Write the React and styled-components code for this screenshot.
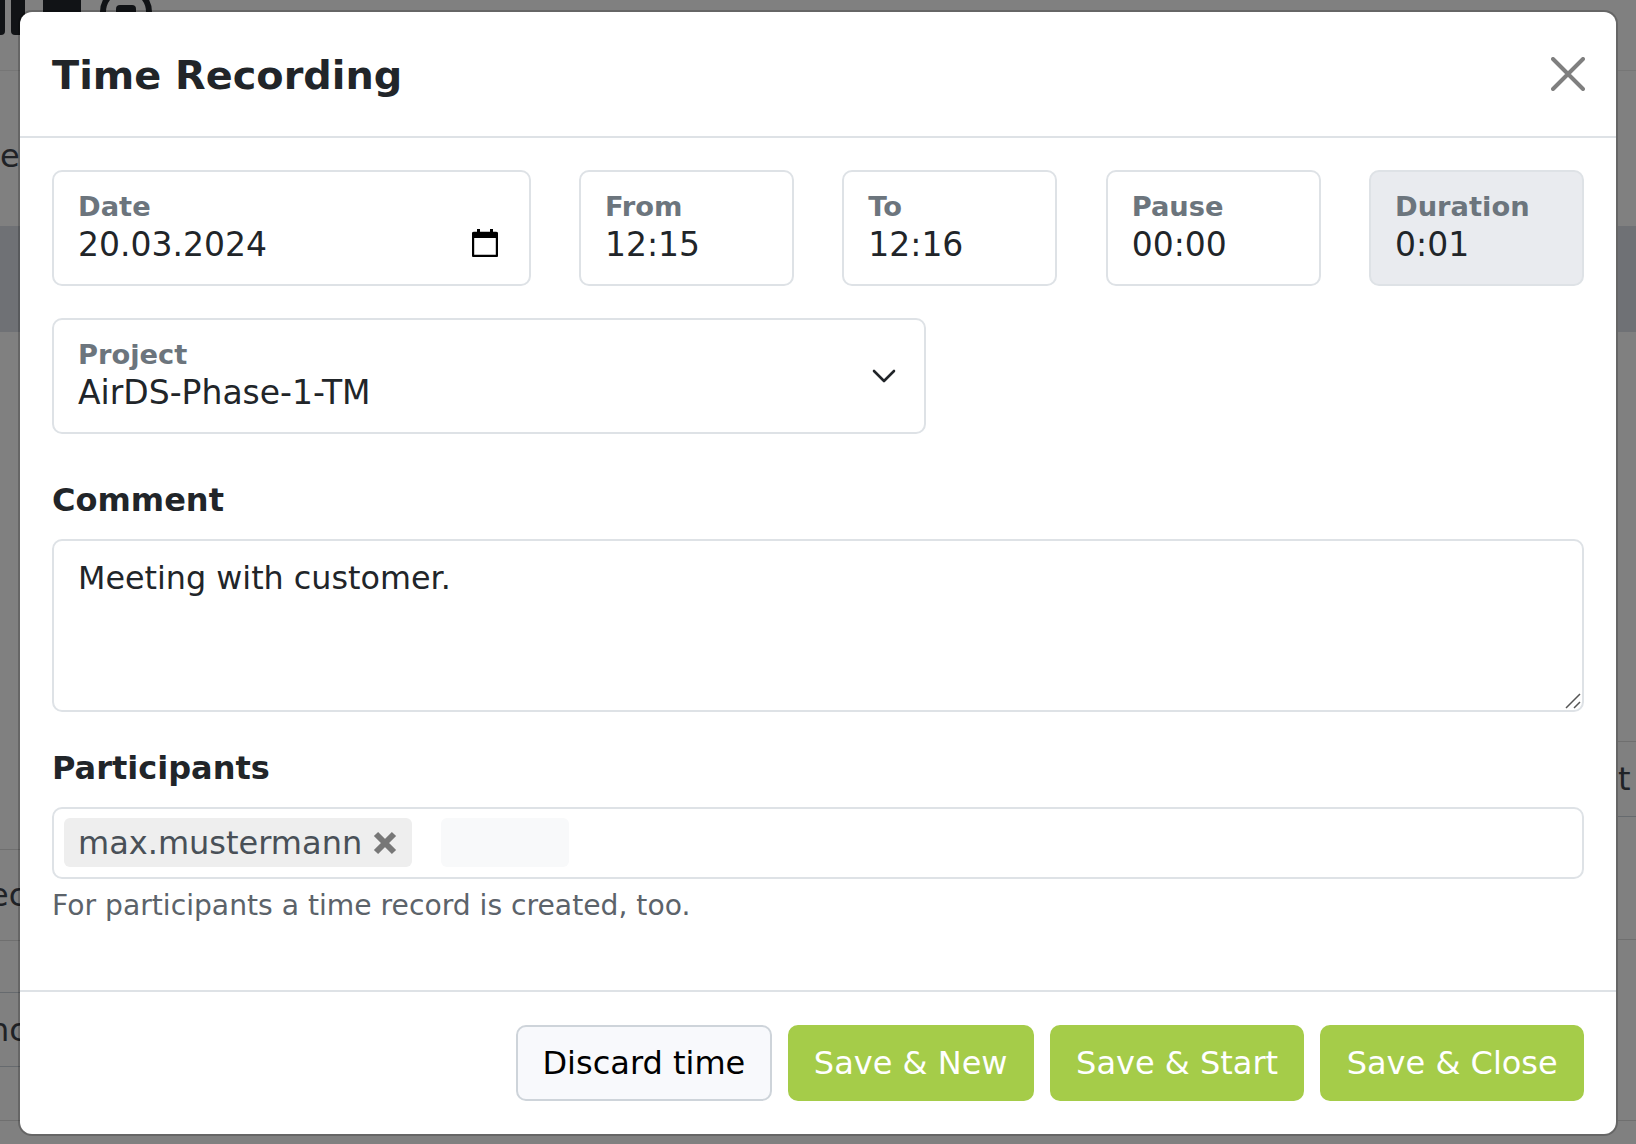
import React from 'react'
import styled, { createGlobalStyle } from 'styled-components'

const GlobalStyle = createGlobalStyle`
  html, body {
    margin: 0;
    padding: 0;
    height: 100%;
    background: #808080;
    font-family: "DejaVu Sans", Verdana, sans-serif;
    overflow: hidden;
  }
`

const Page = styled.div`
  position: relative;
  width: 1636px;
  height: 1144px;
  overflow: hidden;
  display: flex;
  flex-direction: column;
  background: #808080;
`
const TopIcons = styled.svg`
  display: block;
  flex-shrink: 0;
`
const Strips = styled.div`
  flex: 1;
  display: flex;
  justify-content: space-between;
`
const Strip = styled.div`
  width: ${props => props.$width}px;
  display: flex;
  flex-direction: column;
  overflow: hidden;
`
const BackRow = styled.div`
  box-sizing: border-box;
  flex-shrink: 0;
  height: ${props => props.$height}px;
  padding-top: ${props => props.$pad || 0}px;
  display: flex;
  align-items: center;
  background: ${props => props.$bg || 'transparent'};
  border-bottom: 1px solid ${props => props.$line || 'transparent'};
`
const BackText = styled.span`
  margin-left: ${props => props.$shift || 0}px;
  font-size: 32px;
  white-space: nowrap;
  color: #1f2226;
`
const Modal = styled.div`
  position: absolute;
  top: 12px;
  left: 20px;
  width: 1596px;
  height: 1122px;
  display: flex;
  flex-direction: column;
  background: #fff;
  border-radius: 12px;
  box-shadow: 0 0 0 2px rgba(0,0,0,0.2);
`
const Header = styled.div`
  height: 126px;
  flex-shrink: 0;
  box-sizing: border-box;
  padding: 0 31px 0 32px;
  display: flex;
  align-items: center;
  justify-content: space-between;
  border-bottom: 2px solid #dee2e6;
`
const Title = styled.h1`
  margin: 2px 0 0;
  font-size: 39.8px;
  font-weight: 700;
  color: #212529;
`
const Body = styled.div`
  flex: 1;
  padding: 32px 32px 0;
`
const FieldRow = styled.div`
  display: grid;
  grid-template-columns: 478.5px repeat(4, 1fr);
  column-gap: 48.4px;
`
const Field = styled.div`
  box-sizing: border-box;
  height: 116px;
  padding: 16px 24px 0;
  position: relative;
  border: 2px solid #dee2e6;
  border-radius: 10px;
  background: ${props => props.$disabled ? '#e9ebef' : '#fff'};
`
const ProjectField = styled(Field)`
  width: 874px;
  margin-top: 32px;
`
const FieldLabel = styled.div`
  font-size: 27.3px;
  font-weight: 700;
  line-height: 37px;
  color: #6c757d;
`
const FieldValue = styled.div`
  font-size: 33px;
  line-height: 40px;
  color: #212529;
`
const SideIcon = styled.svg`
  position: absolute;
  right: ${props => props.$right}px;
  top: ${props => props.$top}px;
`
const SectionLabel = styled.div`
  margin-top: ${props => props.$top}px;
  font-size: 32px;
  font-weight: 700;
  line-height: 40px;
  color: #212529;
`
const CommentBox = styled.div`
  box-sizing: border-box;
  position: relative;
  margin-top: 19px;
  height: 173px;
  padding: 17px 24px;
  border: 2px solid #dee2e6;
  border-radius: 10px;
  font-size: 31.8px;
  line-height: 40px;
  color: #212529;
`
const Grip = styled.svg`
  position: absolute;
  right: 1px;
  bottom: 1px;
`
const TagBox = styled.div`
  box-sizing: border-box;
  margin-top: 19px;
  height: 72px;
  padding: 9px 10px;
  display: flex;
  gap: 29px;
  border: 2px solid #dee2e6;
  border-radius: 10px;
`
const Tag = styled.div`
  height: 49px;
  box-sizing: border-box;
  padding: 0 14px;
  display: flex;
  align-items: center;
  gap: 10px;
  background: #eee;
  border-radius: 6px;
  font-size: 32px;
  color: #495057;
`
const EmptyTag = styled.div`
  width: 128px;
  height: 49px;
  background: #f8f9fa;
  border-radius: 6px;
`
const HelpText = styled.div`
  margin-top: 8px;
  font-size: 28.2px;
  line-height: 38px;
  color: #5c636a;
`
const Footer = styled.div`
  height: 144px;
  flex-shrink: 0;
  box-sizing: border-box;
  padding: 33px 32px 0;
  display: flex;
  justify-content: flex-end;
  gap: 16px;
  border-top: 2px solid #dee2e6;
`
const Button = styled.button`
  height: 76px;
  padding: 0 24.3px;
  border-radius: 10px;
  font-family: inherit;
  font-size: 32px;
  border: 2px solid ${props => props.$primary ? '#a5cc49' : '#ced4da'};
  background: ${props => props.$primary ? '#a5cc49' : '#f8f9fc'};
  color: ${props => props.$primary ? '#fff' : '#000'};
`

export default function App() {
  return (
    <Page>
      <GlobalStyle />
      <TopIcons width="180" height="36" viewBox="0 0 180 36">
        <path d="M0 0h5v31a4 4 0 0 1-4 4H0z" fill="#111316" />
        <path d="M11 0h14v35h-10a4 4 0 0 1-4-4z" fill="#111316" />
        <rect x="43" y="-8" width="38" height="44" rx="4" fill="#111316" />
        <circle cx="126" cy="12" r="23" fill="none" stroke="#111316" strokeWidth="6" />
        <rect x="116" y="5" width="20" height="20" rx="4" fill="#111316" />
      </TopIcons>
      <Strips>
        <Strip $width={20}>
          <BackRow $height={35} $line="#767676" />
          <BackRow $height={155} $pad={16}><BackText>e</BackText></BackRow>
          <BackRow $height={106} $bg="#6f7175" />
          <BackRow $height={518} $line="#6f6f6f" />
          <BackRow $height={91} $line="#6f6f6f"><BackText $shift={-11}>ec</BackText></BackRow>
          <BackRow $height={52} $line="#666a6e" />
          <BackRow $height={74} $line="#666a6e"><BackText $shift={-11}>nc</BackText></BackRow>
          <BackRow $height={54} $line="#6f6f6f" />
        </Strip>
        <Strip $width={18}>
          <BackRow $height={35} $line="#767676" />
          <BackRow $height={155} />
          <BackRow $height={106} $bg="#6f7175" />
          <BackRow $height={410} $line="#6f6f6f" />
          <BackRow $height={75} $line="#666a6e"><BackText>t</BackText></BackRow>
          <BackRow $height={123} $line="#6f6f6f" />
          <BackRow $height={181} $line="#6f6f6f" />
        </Strip>
      </Strips>
      <Modal>
        <Header>
          <Title>Time Recording</Title>
          <svg width="34" height="34" viewBox="0 0 34 34">
            <path d="M2 2 L32 32 M32 2 L2 32" stroke="#7f7f7f" strokeWidth="4" strokeLinecap="round" />
          </svg>
        </Header>
        <Body>
          <FieldRow>
            <Field>
              <FieldLabel>Date</FieldLabel>
              <FieldValue>20.03.2024</FieldValue>
              <SideIcon $right={31} $top={57} width="26" height="28" viewBox="0 0 26 28">
                <path d="M2 4h22a1 1 0 0 1 1 1v21a1 1 0 0 1-1 1H2a1 1 0 0 1-1-1V5a1 1 0 0 1 1-1z" fill="none" stroke="#000" strokeWidth="2.4" />
                <path d="M1 4h24v5H1z M5 0h3v4H5z M18 0h3v4h-3z" fill="#000" />
              </SideIcon>
            </Field>
            <Field><FieldLabel>From</FieldLabel><FieldValue>12:15</FieldValue></Field>
            <Field><FieldLabel>To</FieldLabel><FieldValue>12:16</FieldValue></Field>
            <Field><FieldLabel>Pause</FieldLabel><FieldValue>00:00</FieldValue></Field>
            <Field $disabled><FieldLabel>Duration</FieldLabel><FieldValue>0:01</FieldValue></Field>
          </FieldRow>
          <ProjectField>
            <FieldLabel>Project</FieldLabel>
            <FieldValue>AirDS-Phase-1-TM</FieldValue>
            <SideIcon $right={28} $top={49} width="24" height="14" viewBox="0 0 24 14">
              <path d="M2 2l10 10L22 2" fill="none" stroke="#212529" strokeWidth="2.6" strokeLinecap="round" strokeLinejoin="round" />
            </SideIcon>
          </ProjectField>
          <SectionLabel $top={46}>Comment</SectionLabel>
          <CommentBox>
            Meeting with customer.
            <Grip width="16" height="16" viewBox="0 0 16 16">
              <path d="M1 15L15 1M9 15l6-6" stroke="#555" strokeWidth="1.5" />
            </Grip>
          </CommentBox>
          <SectionLabel $top={36}>Participants</SectionLabel>
          <TagBox>
            <Tag>
              max.mustermann
              <svg width="26" height="26" viewBox="0 0 26 26">
                <path d="M4 4L22 22M22 4L4 22" stroke="#777" strokeWidth="6" />
              </svg>
            </Tag>
            <EmptyTag />
          </TagBox>
          <HelpText>For participants a time record is created, too.</HelpText>
        </Body>
        <Footer>
          <Button>Discard time</Button>
          <Button $primary>Save &amp; New</Button>
          <Button $primary>Save &amp; Start</Button>
          <Button $primary>Save &amp; Close</Button>
        </Footer>
      </Modal>
    </Page>
  )
}
